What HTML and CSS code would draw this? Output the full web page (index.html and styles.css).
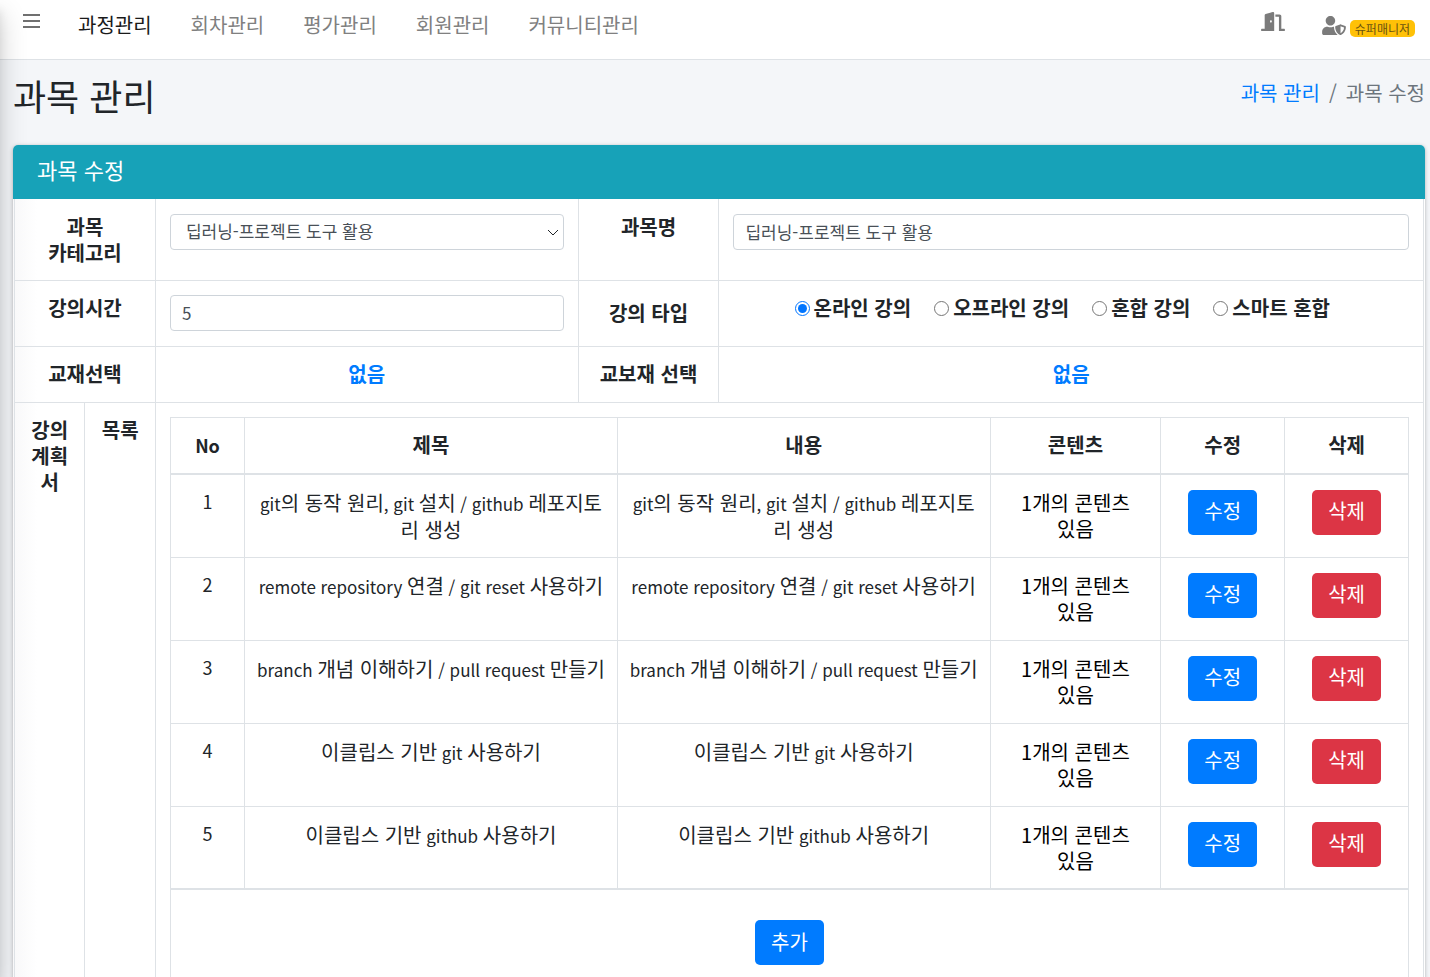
FILE: index.html
```html
<!DOCTYPE html>
<html lang="ko">
<head>
<meta charset="utf-8">
<meta name="viewport" content="width=device-width, initial-scale=1">
<title>과목 관리</title>
<link rel="stylesheet" href="styles.css">
</head>
<body>
<div class="app">
  <header class="topbar">
    <button class="menu-toggle" type="button" aria-label="메뉴">
      <svg viewBox="0 0 17 16" width="17" height="16" fill="currentColor"><path d="M0 1h17v2H0zM0 7h17v2H0zM0 13h17v2H0z"/></svg>
    </button>
    <nav class="main-nav">
      <a class="active" href="#">과정관리</a>
      <a href="#">회차관리</a>
      <a href="#">평가관리</a>
      <a href="#">회원관리</a>
      <a href="#">커뮤니티관리</a>
    </nav>
    <div class="tools">
      <a class="logout" href="#" aria-label="로그아웃">
        <svg viewBox="0 0 640 512" width="24" height="19" fill="currentColor"><path d="M624 448h-80V113.450C544 86.190 522.470 64 496 64H384v64h96v384h144c8.840 0 16-7.160 16-16v-32c0-8.840-7.160-16-16-16zM312.240 1.010l-192 49.740C105.990 54.440 96 67.700 96 82.920V448H16c-8.840 0-16 7.160-16 16v32c0 8.840 7.160 16 16 16h336V33.180c0-21.580-19.560-37.410-39.760-32.170zM264 288c-13.250 0-24-14.330-24-32s10.750-32 24-32 24 14.330 24 32-10.750 32-24 32z"/></svg>
      </a>
      <a class="account" href="#">
        <svg viewBox="0 0 640 512" width="24" height="19" fill="currentColor"><path d="M622.300 271.100l-115.200-45c-4.100-1.600-12.600-3.700-22.200 0l-115.200 45c-10.700 4.200-17.700 14-17.700 24.900 0 111.600 68.700 188.800 132.900 213.900 9.600 3.700 18 1.600 22.200 0C558.400 489.900 640 420.500 640 296c0-10.900-7-20.700-17.700-24.900zM496 462.400V273.300l95.500 37.300c-5.600 87.100-60.900 135.400-95.500 151.800zM224 256c70.700 0 128-57.300 128-128S294.700 0 224 0 96 57.300 96 128s57.300 128 128 128zm96 40c0-2.500.8-4.800 1.100-7.200-2.500-.1-4.900-.8-7.500-.8h-16.700c-22.200 10.200-46.900 16-72.900 16s-50.600-5.800-72.900-16h-16.700C60.200 288 0 348.200 0 422.400V464c0 26.500 21.500 48 48 48h352c6.800 0 13.300-1.500 19.200-4-54-42.900-99.200-116.700-99.200-212z"/></svg>
        <span class="badge">슈퍼매니저</span>
      </a>
    </div>
  </header>

  <main class="content">
    <div class="page-head">
      <h1>과목 관리</h1>
      <nav class="breadcrumb"><a href="#">과목 관리</a><span>/</span><span>과목 수정</span></nav>
    </div>

    <section class="card">
      <h2 class="card-header">과목 수정</h2>
      <form class="card-form">
      <table class="form-table">
        <colgroup><col class="w5"><col class="w5"><col class="w30"><col class="w10"><col class="w50"></colgroup>
        <tbody>
          <tr>
            <th colspan="2"><label class="stacked" for="category"><span>과목</span><span>카테고리</span></label></th>
            <td>
              <div class="select-wrap">
                <select id="category" class="field"><option>딥러닝-프로젝트 도구 활용</option></select>
                <svg viewBox="0 0 12 8" width="12" height="8" fill="none" stroke="currentColor"><path d="M1 1l5 5 5-5"/></svg>
              </div>
            </td>
            <th><label for="subject">과목명</label></th>
            <td><input id="subject" class="field" type="text" value="딥러닝-프로젝트 도구 활용"></td>
          </tr>
          <tr>
            <th colspan="2"><label for="hours">강의시간</label></th>
            <td><input id="hours" class="field" type="text" value="5"></td>
            <th class="middle">강의 타입</th>
            <td>
              <div class="radios">
                <label><input type="radio" name="type" checked>온라인 강의</label>
                <label><input type="radio" name="type">오프라인 강의</label>
                <label><input type="radio" name="type">혼합 강의</label>
                <label><input type="radio" name="type">스마트 혼합</label>
              </div>
            </td>
          </tr>
          <tr>
            <th colspan="2">교재선택</th>
            <td class="choice"><a href="#">없음</a></td>
            <th>교보재 선택</th>
            <td class="choice"><a href="#">없음</a></td>
          </tr>
          <tr>
            <th>강의계획서</th>
            <th>목록</th>
            <td colspan="3">
              <table class="plan-table">
                <colgroup><col class="c-no"><col class="c-text"><col class="c-text"><col class="c-content"><col class="c-action"><col class="c-action"></colgroup>
                <thead>
                  <tr><th class="number">No</th><th>제목</th><th>내용</th><th>콘텐츠</th><th>수정</th><th>삭제</th></tr>
                </thead>
                <tbody>
                  <tr><td class="number">1</td><td><span class="latin">git</span>의 동작 원리<span class="latin">, git </span>설치<span class="latin"> / github </span>레포지토리 생성</td><td><span class="latin">git</span>의 동작 원리<span class="latin">, git </span>설치<span class="latin"> / github </span>레포지토리 생성</td><td class="link"><a href="#">1개의 콘텐츠 있음</a></td><td><button class="btn primary" type="button">수정</button></td><td><button class="btn danger" type="button">삭제</button></td></tr>
                  <tr><td class="number">2</td><td><span class="latin">remote repository </span>연결<span class="latin"> / git reset </span>사용하기</td><td><span class="latin">remote repository </span>연결<span class="latin"> / git reset </span>사용하기</td><td class="link"><a href="#">1개의 콘텐츠 있음</a></td><td><button class="btn primary" type="button">수정</button></td><td><button class="btn danger" type="button">삭제</button></td></tr>
                  <tr><td class="number">3</td><td><span class="latin">branch </span>개념 이해하기<span class="latin"> / pull request </span>만들기</td><td><span class="latin">branch </span>개념 이해하기<span class="latin"> / pull request </span>만들기</td><td class="link"><a href="#">1개의 콘텐츠 있음</a></td><td><button class="btn primary" type="button">수정</button></td><td><button class="btn danger" type="button">삭제</button></td></tr>
                  <tr><td class="number">4</td><td>이클립스 기반<span class="latin"> git </span>사용하기</td><td>이클립스 기반<span class="latin"> git </span>사용하기</td><td class="link"><a href="#">1개의 콘텐츠 있음</a></td><td><button class="btn primary" type="button">수정</button></td><td><button class="btn danger" type="button">삭제</button></td></tr>
                  <tr><td class="number">5</td><td>이클립스 기반<span class="latin"> github </span>사용하기</td><td>이클립스 기반<span class="latin"> github </span>사용하기</td><td class="link"><a href="#">1개의 콘텐츠 있음</a></td><td><button class="btn primary" type="button">수정</button></td><td><button class="btn danger" type="button">삭제</button></td></tr>
                </tbody>
                <tfoot>
                  <tr><td colspan="6"><button class="btn primary" type="button">추가</button></td></tr>
                </tfoot>
              </table>
            </td>
          </tr>
        </tbody>
      </table>
      </form>
    </section>
  </main>
</div>
</body>
</html>
```
FILE: styles.css
```css
* { box-sizing: border-box; }

body {
  margin: 0;
  background: #f4f6f9;
  color: #212529;
  font: 20px/26px "Noto Sans CJK KR", sans-serif;
}

a { color: #007bff; text-decoration: none; }

.latin { font-size: 17px; }
.number { font-size: 18px; }

.app {
  position: relative;
  height: 100vh;
  overflow-x: hidden;
  overflow-y: auto;
  scrollbar-width: none;
}

/* shadow cast by the collapsed sidebar */
.app::before {
  content: "";
  position: absolute;
  z-index: 1;
  top: 0;
  bottom: 0;
  left: -20px;
  width: 20px;
  box-shadow: 0 14px 28px rgba(0, 0, 0, .2), 0 10px 10px rgba(0, 0, 0, .1);
}

.topbar {
  display: flex;
  align-items: flex-start;
  height: 60px;
  padding: 12px 15px 0 23px;
  border-bottom: 1px solid #dee2e6;
  background: #fff;
}

.menu-toggle {
  height: 18px;
  padding: 0;
  border: 0;
  background: none;
  color: #707070;
  line-height: 0;
}

.main-nav { display: flex; gap: 39px; margin-left: 38px; }
.main-nav a { color: #808080; }
.main-nav a.active { color: #1a1a1a; }

.tools { display: flex; gap: 37px; margin-left: auto; }
.tools a { color: #7b7b7b; }
.tools svg { display: block; }
.account { display: flex; align-items: flex-start; gap: 4px; padding-top: 4px; }

.badge {
  margin-top: 4px;
  padding: 0 5px;
  border-radius: 5px;
  background: #ffc107;
  color: #6b5310;
  font-size: 12px;
  line-height: 17px;
}

.content { padding: 0 5px 16px 13px; }

.page-head {
  display: flex;
  justify-content: space-between;
  padding: 14px 0 29px;
}

h1 { margin: 0; font-size: 36px; font-weight: 400; line-height: 42px; }
.breadcrumb { display: flex; gap: 9px; padding-top: 6px; color: #6c757d; }

.card {
  position: relative;
  z-index: 2;
  border-radius: 5px;
  background: linear-gradient(90deg, #f8f8f9, #fff 24px);
  box-shadow: 0 0 1px rgba(0, 0, 0, .13), 0 1px 4px rgba(0, 0, 0, .25);
}

.card-header {
  margin: 0;
  padding: 10px 24px 16px;
  border-radius: 5px 5px 0 0;
  background: #17a2b8;
  color: #fff;
  font-size: 22px;
  font-weight: 400;
  line-height: 28px;
}

.card-form { padding: 0 1px; }

table { width: 100%; table-layout: fixed; border-collapse: collapse; }
th, td {
  padding: 14px 14px 15px;
  border: 1px solid #dee2e6;
  text-align: center;
  vertical-align: top;
}
th { font-weight: 700; }
.form-table > tbody > tr:first-child > * { border-top: 0; padding: 15px 14px 14px; }
.form-table th.middle { vertical-align: middle; }
.stacked { display: flex; flex-direction: column; }

.w5 { width: 5%; }
.w10 { width: 10%; }
.w30 { width: 30%; }
.w50 { width: 50%; }

.field {
  display: block;
  width: 100%;
  height: 36px;
  padding: 0 11px 2px;
  border: 1px solid #ced4da;
  border-radius: 4px;
  background: #fff;
  color: #495057;
  font: 17px/26px "Noto Sans CJK KR", sans-serif;
}

.select-wrap { position: relative; }
.select-wrap select { appearance: none; padding: 0 15px 2px; }
.select-wrap svg { position: absolute; right: 5px; top: 15px; pointer-events: none; }

.radios { display: flex; justify-content: center; gap: 23px; padding-right: 18px; font-weight: 700; }
.radios label { display: flex; align-items: center; gap: 4px; }
.radios input { width: 15px; height: 15px; margin: 0; accent-color: #0075ff; }
.choice { font-weight: 700; }

.c-no { width: 6%; }
.c-text { width: 30.1%; }
.c-content { width: 13.8%; }
.c-action { width: 10%; }

.plan-table thead th { height: 56px; padding-bottom: 14px; border-bottom-width: 2px; }
.plan-table tbody td { height: 83px; padding: 15px 10px 14px; }
.plan-table tbody td.number { padding-top: 13px; }
.plan-table tbody td.link { padding-left: 24px; padding-right: 24px; }
.plan-table tbody a { color: #000; }
.plan-table tfoot td { height: 104px; padding-top: 30px; border-top-width: 2px; }

.btn {
  height: 45px;
  padding: 0 16px 2px;
  border: 0;
  border-radius: 5px;
  color: #fff;
  font: inherit;
  vertical-align: top;
}
.primary { background: #007bff; }
.danger { background: #dc3545; }
```
